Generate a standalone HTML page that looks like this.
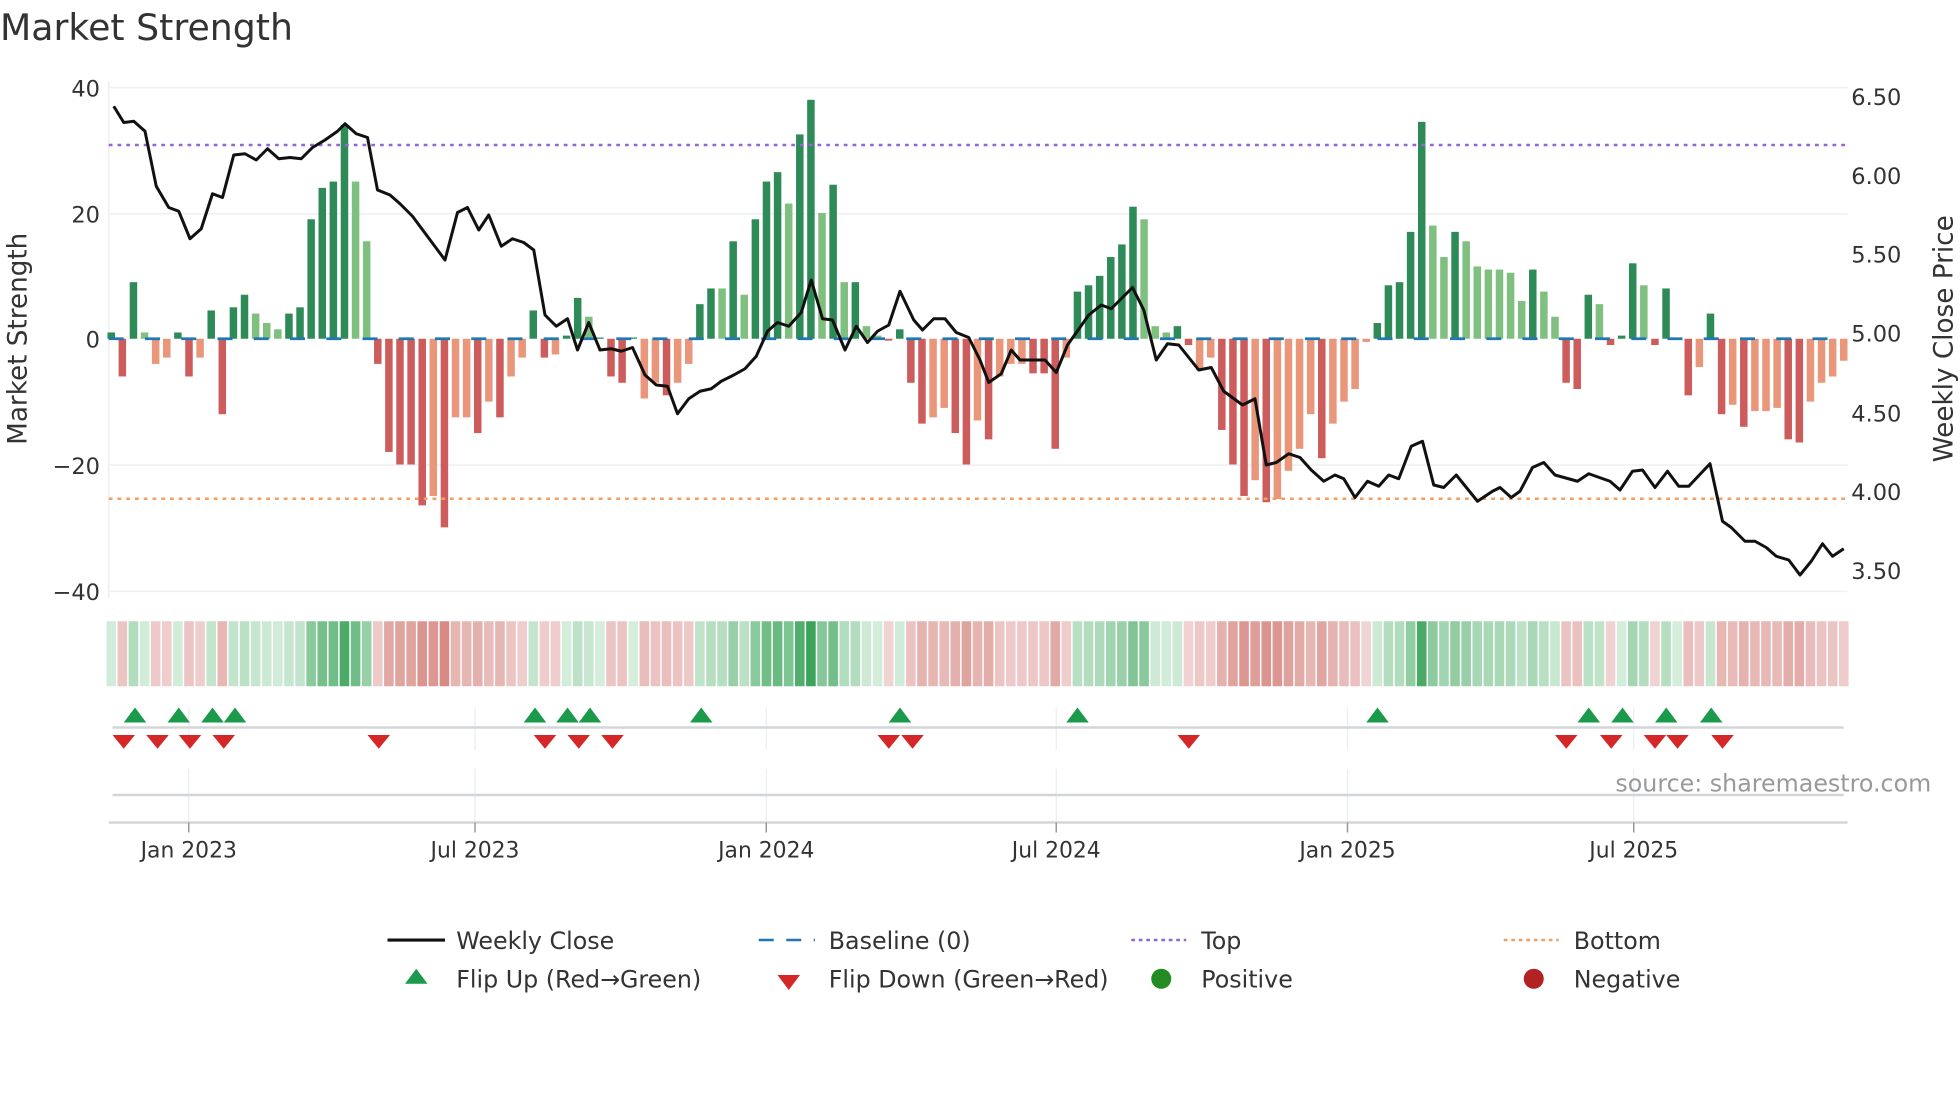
<!DOCTYPE html>
<html><head><meta charset="utf-8"><style>
html,body{margin:0;padding:0;background:#fff;width:1960px;height:1102px;overflow:hidden}
svg{display:block}
text{font-family:"DejaVu Sans","Liberation Sans",sans-serif;fill:#333}
</style></head><body>
<svg id="s" width="1960" height="1102" viewBox="0 0 1568 881.6" xmlns="http://www.w3.org/2000/svg">
<text x="0" y="32" font-size="29">Market Strength</text>
<g stroke="#eef0f3" stroke-width="1.3">
<line x1="87" x2="1478" y1="70" y2="70"/><line x1="87" x2="1478" y1="171" y2="171"/>
<line x1="87" x2="1478" y1="372" y2="372"/><line x1="87" x2="1478" y1="473" y2="473"/>
<line x1="87" x2="87" y1="65" y2="478"/>
</g>
<g font-size="18" text-anchor="end">
<text x="80" y="77">40</text><text x="80" y="178">20</text><text x="80" y="278">0</text>
<text x="80" y="379">−20</text><text x="80" y="480">−40</text>
</g>
<g font-size="18">
<text x="1481" y="84">6.50</text><text x="1481" y="147">6.00</text><text x="1481" y="210">5.50</text>
<text x="1481" y="273">5.00</text><text x="1481" y="337">4.50</text><text x="1481" y="400">4.00</text>
<text x="1481" y="463">3.50</text>
</g>
<text transform="translate(21,271) rotate(-90)" font-size="21" text-anchor="middle">Market Strength</text>
<text transform="translate(1562,271) rotate(-90)" font-size="21" text-anchor="middle">Weekly Close Price</text>
<g id="bars"></g>
<line x1="87" x2="1478" y1="271" y2="271" stroke="#1f77b4" stroke-width="2.2" stroke-dasharray="12,17"/>
<line x1="87" x2="1478" y1="116" y2="116" stroke="#9467d0" stroke-width="2" stroke-dasharray="3,4"/>
<line x1="87" x2="1478" y1="399" y2="399" stroke="#f0a060" stroke-width="2" stroke-dasharray="3,4"/>
<polyline id="price" fill="none" stroke="#111" stroke-width="2.4" stroke-linejoin="round"/>
<g id="heat"></g>
<g stroke="#e8eef2" stroke-width="1">
<line x1="151" x2="151" y1="566" y2="600"/><line x1="380" x2="380" y1="566" y2="600"/><line x1="613" x2="613" y1="566" y2="600"/><line x1="845" x2="845" y1="566" y2="600"/><line x1="1078" x2="1078" y1="566" y2="600"/><line x1="1307" x2="1307" y1="566" y2="600"/>
<line x1="151" x2="151" y1="615" y2="658"/><line x1="380" x2="380" y1="615" y2="658"/><line x1="613" x2="613" y1="615" y2="658"/><line x1="845" x2="845" y1="615" y2="658"/><line x1="1078" x2="1078" y1="615" y2="658"/><line x1="1307" x2="1307" y1="615" y2="658"/>
</g>
<line x1="90" x2="1475" y1="582" y2="582" stroke="#d3d6d8" stroke-width="2"/>
<line x1="90" x2="1475" y1="636" y2="636" stroke="#d3d6d8" stroke-width="2"/>
<line x1="87" x2="1478" y1="658" y2="658" stroke="#d3d6d8" stroke-width="2"/>
<g id="marks"></g>
<g stroke="#999" stroke-width="1.2">
<line x1="151" x2="151" y1="658" y2="666"/><line x1="380" x2="380" y1="658" y2="666"/><line x1="613" x2="613" y1="658" y2="666"/><line x1="845" x2="845" y1="658" y2="666"/><line x1="1078" x2="1078" y1="658" y2="666"/><line x1="1307" x2="1307" y1="658" y2="666"/>
</g>
<g font-size="17.5" text-anchor="middle">
<text x="151" y="686">Jan 2023</text><text x="380" y="686">Jul 2023</text><text x="613" y="686">Jan 2024</text>
<text x="845" y="686">Jul 2024</text><text x="1078" y="686">Jan 2025</text><text x="1307" y="686">Jul 2025</text>
</g>
<text x="1545" y="633" font-size="19" text-anchor="end" style="fill:#999">source: sharemaestro.com</text>
<g font-size="19">
<line x1="310" x2="356" y1="752" y2="752" stroke="#111" stroke-width="2.5"/>
<text x="365" y="759">Weekly Close</text>
<line x1="607" x2="652" y1="752" y2="752" stroke="#1f77b4" stroke-width="2" stroke-dasharray="12,10"/>
<text x="663" y="759">Baseline (0)</text>
<line x1="905" x2="949" y1="752" y2="752" stroke="#9467d0" stroke-width="2" stroke-dasharray="3,3"/>
<text x="961" y="759">Top</text>
<line x1="1203" x2="1247" y1="752" y2="752" stroke="#f0a060" stroke-width="2" stroke-dasharray="3,3"/>
<text x="1259" y="759">Bottom</text>
<polygon points="333,775 342,787 324,787" fill="#1a9a4a"/>
<text x="365" y="790">Flip Up (Red→Green)</text>
<polygon points="622,780 640,780 631,792" fill="#d62728"/>
<text x="663" y="790">Flip Down (Green→Red)</text>
<circle cx="929" cy="783" r="8" fill="#228b22"/>
<text x="961" y="790">Positive</text>
<circle cx="1227" cy="783" r="8" fill="#b22222"/>
<text x="1259" y="790">Negative</text>
</g>
</svg>
<script>
var NS="http://www.w3.org/2000/svg";
function el(t,a,p){var e=document.createElementNS(NS,t);for(var k in a)e.setAttribute(k,a[k]);p.appendChild(e);return e;}
var V="1d,-6r,9d,1l,-4o,-3o,1d,-6r,-3o,4.5d,-12r,5d,7d,4l,2.5l,1.5l,4d,5d,19d,24d,25d,34d,25l,15.5l,-4r,-18r,-20r,-20r,-26.5r,-25o,-30r,-12.5o,-12.5o,-15r,-10o,-12.5r,-6o,-3o,4.5d,-3r,-2.5o,0.5d,6.5d,3.5l,0.2d,-6r,-7r,0.2d,-9.5o,-7o,-9r,-7o,-4o,5.5d,8d,8l,15.5d,7l,19d,25d,26.5d,21.5l,32.5d,38d,20l,24.5d,9l,9d,2l,0.5l,-0.3r,1.5d,-7r,-13.5r,-12.5o,-11o,-15r,-20r,-13o,-16r,-6o,-4o,-4o,-5.5r,-5.5r,-17.5r,-3o,7.5d,8.5d,10d,13d,15d,21d,19l,2l,1l,2d,-1r,-5o,-3o,-14.5r,-20r,-25r,-22.5o,-26r,-25.5o,-21o,-17.5o,-12o,-19r,-13.5o,-10o,-8o,-0.5o,2.5d,8.5d,9d,17d,34.5d,18l,13l,17d,15.5l,11.5l,11l,11l,10.5l,6l,11d,7.5l,3.5l,-7r,-8r,7d,5.5l,-1r,0.5d,12d,8.5l,-1r,8d,0.2d,-9r,-4.5o,4d,-12r,-10.5o,-14r,-11.5o,-11.5o,-11o,-16r,-16.5r,-10o,-7o,-6o,-3.5o".split(",");
var C={d:"#2e8b57",l:"#7fbf7f",r:"#cd5c5c",o:"#e9967a"};
var bars=document.getElementById("bars"),heat=document.getElementById("heat");
var n=V.length,step=(1475-89)/(n-1);
for(var i=0;i<n;i++){var v=parseFloat(V[i]),c=V[i].slice(-1),x=89+i*step,h=Math.abs(v)*5.03;
el("rect",{x:x-3,y:v>=0?271-h:271,width:6,height:Math.max(h,0.8),fill:C[c]},bars);
var t=Math.min(Math.abs(v)/38,1),col;
if(v>=0){col="rgb("+Math.round(214-154*t)+","+Math.round(238-75*t)+","+Math.round(221-131*t)+")";}
else{col="rgb("+Math.round(240-30*t)+","+Math.round(212-92*t)+","+Math.round(212-100*t)+")";}
el("rect",{x:x-step/2+0.6,y:497,width:step-1.2,height:52,fill:col},heat);}
var P=[[91,85],[99,98],[107,97],[116,105],[125,149],[135,166],[143,169],[152,191],[161,183],[170,155],[178,158],[187,124],[196,123],[205,128],[214,119],[223,127],[232,126],[241,127],[250,118],[260,112],[270,105],[276,99],[285,107],[294,110],[302,152],[312,156],[320,163],[330,173],[356,208],[366,170],[374,166],[383,184],[391,172],[401,197],[410,191],[419,194],[427,200],[436,252],[445,261],[454,255],[462,280],[471,258],[480,280],[489,279],[497,281],[506,278],[516,300],[525,308],[534,309],[542,331],[551,319],[560,313],[569,311],[577,305],[587,300],[596,295],[605,285],[614,265],[622,258],[631,261],[641,250],[649,224],[658,255],[666,256],[676,280],[685,261],[694,274],[702,265],[711,260],[720,233],[731,256],[738,264],[747,255],[756,255],[765,266],[775,270],[784,288],[791,306],[801,299],[809,280],[816,288],[836,288],[845,298],[854,276],[871,252],[881,244],[889,247],[906,230],[915,248],[925,288],[934,275],[943,276],[959,296],[969,294],[979,313],[994,324],[1004,319],[1013,372],[1021,370],[1031,363],[1040,366],[1049,376],[1059,385],[1068,380],[1075,383],[1084,398],[1094,385],[1103,389],[1111,380],[1119,383],[1129,357],[1138,353],[1147,388],[1155,390],[1165,380],[1182,401],[1194,393],[1200,390],[1209,398],[1216,393],[1226,374],[1235,370],[1244,380],[1262,385],[1271,379],[1288,385],[1296,392],[1306,377],[1314,376],[1324,390],[1334,377],[1343,389],[1351,389],[1368,371],[1378,417],[1385,422],[1396,433],[1404,433],[1413,438],[1421,445],[1431,448],[1440,460],[1449,449],[1458,435],[1466,445],[1475,439]];
document.getElementById("price").setAttribute("points",P.map(function(p){return p.join(",")}).join(" "));
var m=document.getElementById("marks");
[108,143,170,188,428,454,472,561,720,862,1102,1271,1298,1333,1369].forEach(function(x){el("polygon",{points:x+",566 "+(x+9)+",578 "+(x-9)+",578",fill:"#1a9a4a"},m);});
[99,126,152,179,303,436,463,490,711,730,951,1253,1289,1324,1342,1378].forEach(function(x){el("polygon",{points:(x-9)+",588 "+(x+9)+",588 "+x+",599",fill:"#d62728"},m);});
</script>
</body></html>
